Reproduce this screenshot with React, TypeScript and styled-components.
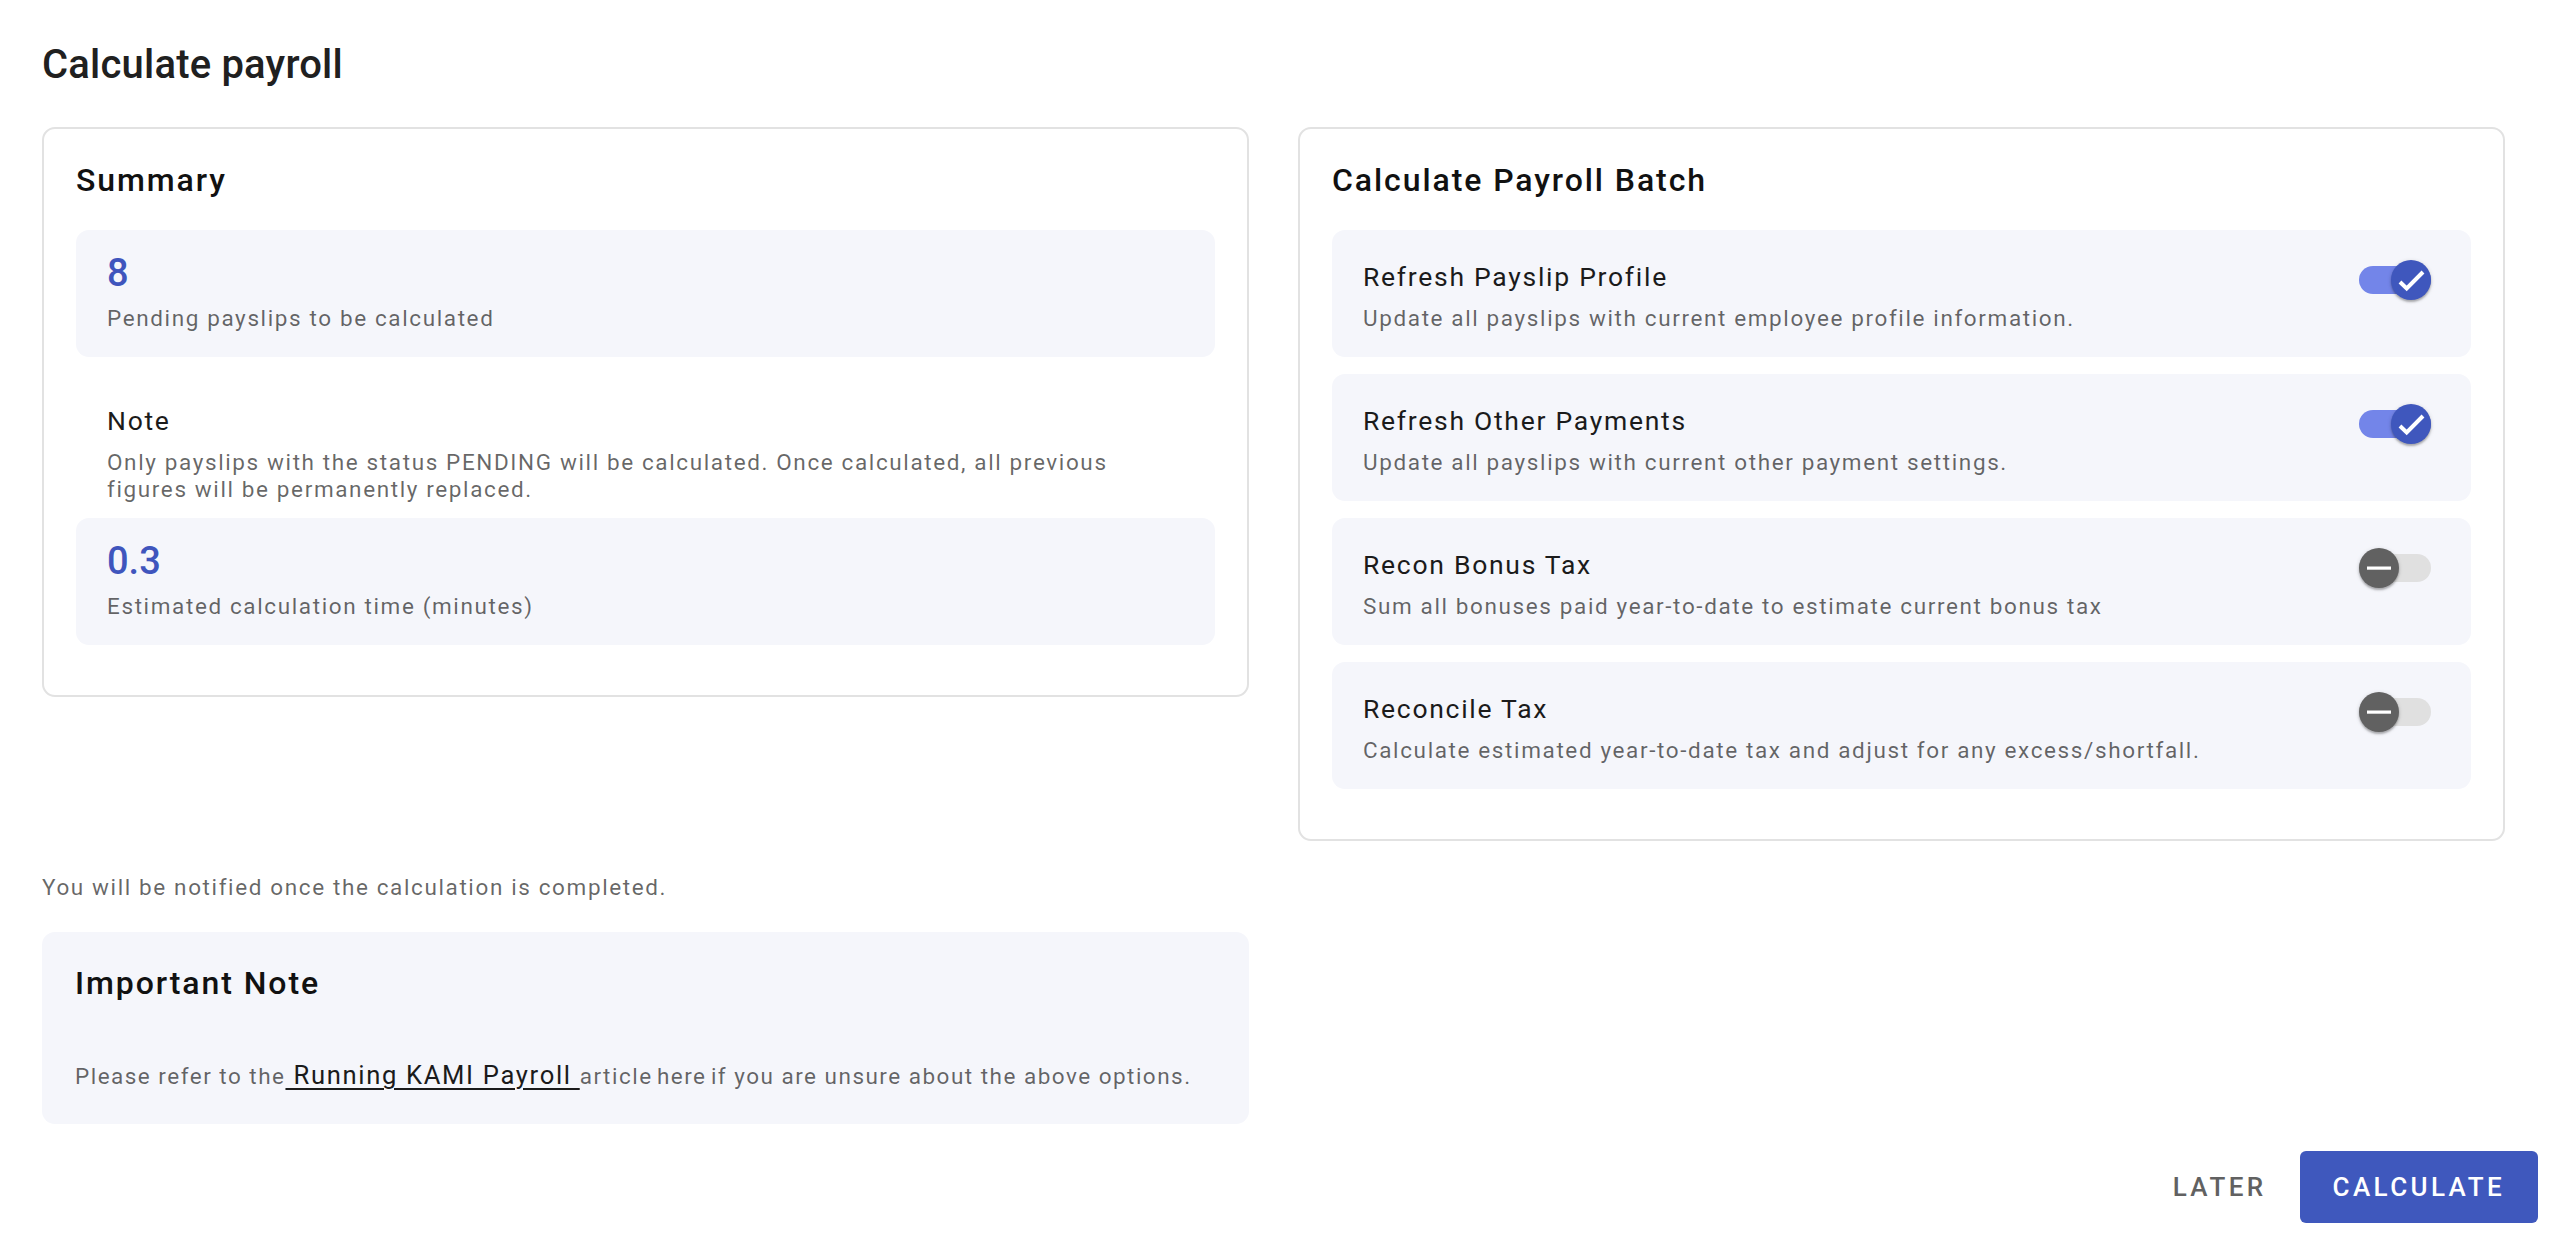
import React from 'react';
import styled, { createGlobalStyle } from 'styled-components';

const GlobalStyle = createGlobalStyle`
  html, body {
    margin: 0;
    padding: 0;
    background: #ffffff;
  }
  body {
    font-family: Roboto, "Liberation Sans", Arial, sans-serif;
    color: rgba(0, 0, 0, 0.87);
    -webkit-font-smoothing: antialiased;
  }
  * {
    box-sizing: border-box;
  }
`;

type Option = {
  title: string;
  desc: string;
  checked: boolean;
};

const options: Option[] = [
  {
    title: 'Refresh Payslip Profile',
    desc: 'Update all payslips with current employee profile information.',
    checked: true,
  },
  {
    title: 'Refresh Other Payments',
    desc: 'Update all payslips with current other payment settings.',
    checked: true,
  },
  {
    title: 'Recon Bonus Tax',
    desc: 'Sum all bonuses paid year-to-date to estimate current bonus tax',
    checked: false,
  },
  {
    title: 'Reconcile Tax',
    desc: 'Calculate estimated year-to-date tax and adjust for any excess/shortfall.',
    checked: false,
  },
];

const Toggle = ({ checked }: { checked: boolean }) => (
  <ToggleRoot>
    <Track $checked={checked} />
    <Thumb $checked={checked}>
      <svg width="40" height="40" viewBox="0 0 40 40">
        {checked ? (
          <path d="M9 22 L15.7 28.5 L32 12" fill="none" stroke="#ffffff" strokeWidth="4" />
        ) : (
          <rect x="8" y="18.5" width="24" height="3.2" fill="#ffffff" />
        )}
      </svg>
    </Thumb>
  </ToggleRoot>
);

const App = () => {
  return (
    <>
      <GlobalStyle />
      <Dialog>
        <Content>
          <PageTitle>Calculate payroll</PageTitle>
          <Layout>
            <Card>
              <CardTitle>Summary</CardTitle>
              <StatBox>
                <StatValue>8</StatValue>
                <StatLabel>Pending payslips to be calculated</StatLabel>
              </StatBox>
              <NoteBlock>
                <NoteTitle>Note</NoteTitle>
                <NoteText>
                  Only payslips with the status PENDING will be calculated. Once calculated, all previous
                  figures will be permanently replaced.
                </NoteText>
              </NoteBlock>
              <StatBox>
                <StatValue>0.3</StatValue>
                <StatLabel>Estimated calculation time (minutes)</StatLabel>
              </StatBox>
            </Card>
            <Card>
              <CardTitle>Calculate Payroll Batch</CardTitle>
              <OptionList>
                {options.map((o) => (
                  <OptionRow key={o.title}>
                    <div>
                      <OptionTitle>{o.title}</OptionTitle>
                      <OptionDesc>{o.desc}</OptionDesc>
                    </div>
                    <Toggle checked={o.checked} />
                  </OptionRow>
                ))}
              </OptionList>
            </Card>
            <BottomStack>
              <Notice>You will be notified once the calculation is completed.</Notice>
              <ImportantBox>
                <ImportantTitle>Important Note</ImportantTitle>
                <ImportantText>
                  Please refer to the<DocLink href="#"> Running KAMI Payroll </DocLink>
                  <Tight>article here if</Tight> you are unsure about the above options.
                </ImportantText>
              </ImportantBox>
            </BottomStack>
          </Layout>
        </Content>
        <Actions>
          <TextButton>Later</TextButton>
          <ContainedButton>Calculate</ContainedButton>
        </Actions>
      </Dialog>
    </>
  );
};

const Dialog = styled.div`
  min-height: 100vh;
  display: flex;
  flex-direction: column;
  background: #ffffff;
`;

const Content = styled.div`
  padding: 41px 49px 27px 42px;
`;

const PageTitle = styled.h2`
  margin: 0;
  font-size: 40px;
  line-height: 48px;
  font-weight: 500;
  letter-spacing: 0.005em;
  color: #202020;
`;

const Layout = styled.div`
  margin-top: 38px;
  display: grid;
  grid-template-columns: 1fr 1fr;
  column-gap: 49px;
  align-items: start;
`;

const Card = styled.section`
  border: 2px solid #e2e2e2;
  border-radius: 13px;
  padding: 31px 32px 50px;
`;

const CardTitle = styled.h6`
  margin: 0 0 30px;
  font-size: 32px;
  line-height: 40px;
  font-weight: 500;
  letter-spacing: 0.06em;
  color: #111111;
`;

const InfoBox = styled.div`
  background: #f5f6fb;
  border-radius: 13px;
`;

const StatBox = styled(InfoBox)`
  padding: 21px 31px 25.5px;
`;

const StatValue = styled.div`
  font-size: 38px;
  line-height: 44px;
  font-weight: 500;
  color: #3f55bd;
`;

const GreyText = styled.div`
  font-size: 22.5px;
  letter-spacing: 0.072em;
  color: rgba(0, 0, 0, 0.6);
`;

const StatLabel = styled(GreyText)`
  margin-top: 8.5px;
  line-height: 28px;
`;

const NoteBlock = styled.div`
  margin: 48px 0 14.5px;
  padding: 0 31px;
`;

const DarkTitle = styled.div`
  font-size: 26.5px;
  line-height: 32px;
  letter-spacing: 0.065em;
  color: #1b1b1b;
`;

const NoteTitle = styled(DarkTitle)``;

const NoteText = styled(GreyText)`
  margin-top: 11.5px;
  line-height: 27.5px;
  max-width: 1050px;
`;

const OptionList = styled.div`
  display: flex;
  flex-direction: column;
  gap: 17px;
`;

const OptionRow = styled(InfoBox)`
  display: flex;
  justify-content: space-between;
  align-items: flex-start;
  padding: 31px 40px 25.5px 31px;
`;

const OptionTitle = styled(DarkTitle)``;

const OptionDesc = styled(GreyText)`
  margin-top: 10.5px;
  line-height: 28px;
`;

const ToggleRoot = styled.span`
  position: relative;
  display: block;
  flex-shrink: 0;
  width: 72px;
  height: 40px;
  margin-top: -1px;
`;

const Track = styled.span<{ $checked: boolean }>`
  position: absolute;
  top: 6px;
  left: 0;
  width: 72px;
  height: 28px;
  border-radius: 14px;
  background: ${({ $checked }) => ($checked ? '#7385e9' : '#e0e0e0')};
`;

const Thumb = styled.span<{ $checked: boolean }>`
  position: absolute;
  top: 0;
  left: ${({ $checked }) => ($checked ? '32px' : '0')};
  width: 40px;
  height: 40px;
  border-radius: 50%;
  background: ${({ $checked }) => ($checked ? '#3f57bd' : '#616161')};
  box-shadow: 0 2px 2px rgba(0, 0, 0, 0.24), 0 1px 4px rgba(0, 0, 0, 0.16);
  svg {
    display: block;
  }
`;

const BottomStack = styled.div`
  grid-column: 1;
  margin-top: 30px;
`;

const Notice = styled(GreyText)`
  line-height: 32px;
`;

const ImportantBox = styled(InfoBox)`
  margin-top: 28.5px;
  padding: 31px 33px 31.5px;
`;

const ImportantTitle = styled(CardTitle)`
  margin-bottom: 56.5px;
`;

const ImportantText = styled(GreyText)`
  line-height: 32px;
  letter-spacing: 0.066em;
`;

const DocLink = styled.a`
  font-size: 25.6px;
  letter-spacing: 0.065em;
  color: #1b1b1b;
  text-decoration: underline;
  text-decoration-thickness: 2px;
  text-underline-offset: 4px;
`;

const Tight = styled.span`
  word-spacing: -0.12em;
`;

const Actions = styled.div`
  margin-top: auto;
  display: flex;
  justify-content: flex-end;
  padding: 0 16px 16px;
`;

const BaseButton = styled.button`
  height: 72px;
  padding: 0 33px;
  border: none;
  border-radius: 6px;
  font-family: inherit;
  font-size: 26px;
  font-weight: 500;
  letter-spacing: 3.4px;
  text-transform: uppercase;
  cursor: pointer;
`;

const TextButton = styled(BaseButton)`
  background: transparent;
  color: #616161;
`;

const ContainedButton = styled(BaseButton)`
  background: #3f58bd;
  color: #ffffff;
`;

export default App;
